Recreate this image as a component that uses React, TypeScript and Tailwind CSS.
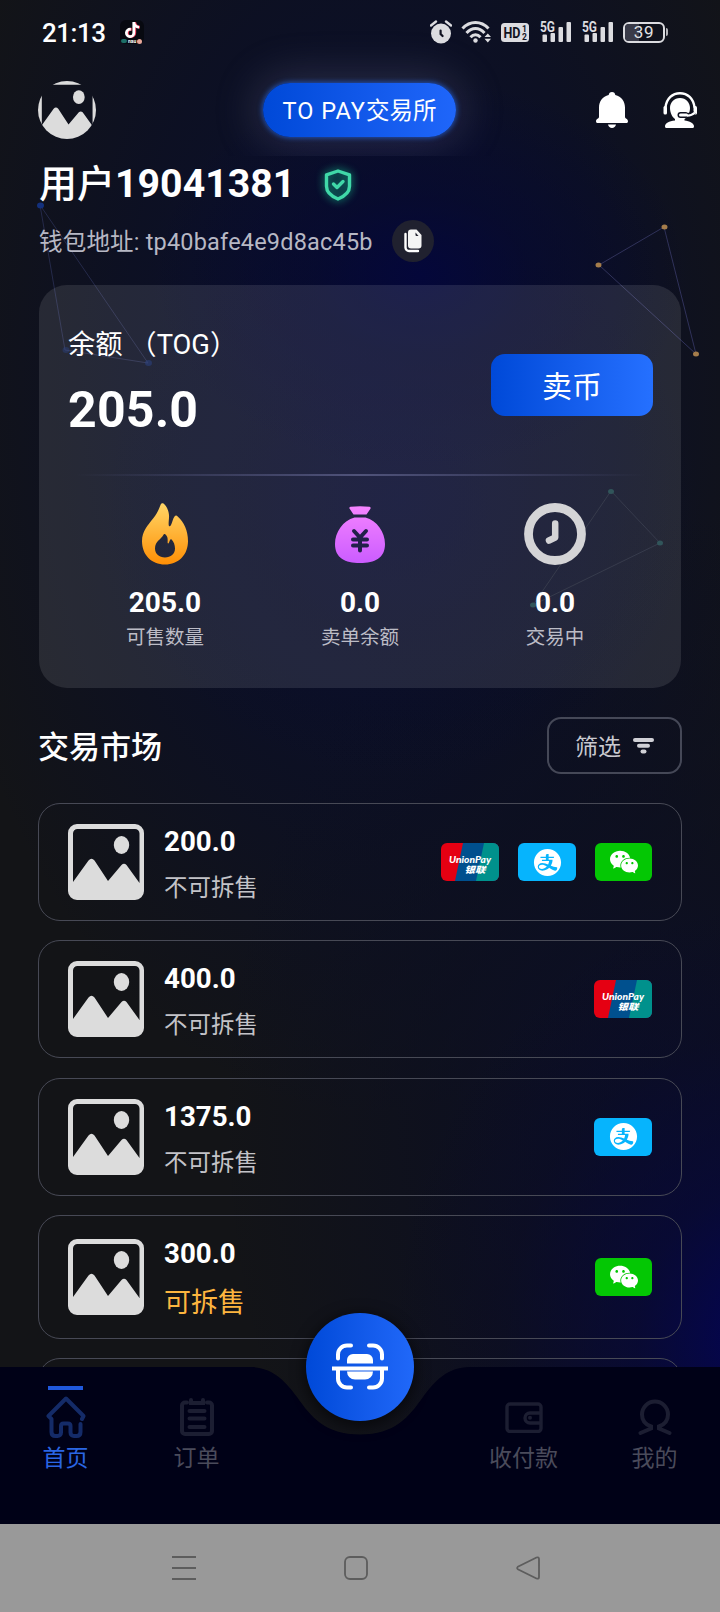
import type { ReactNode } from 'react';
import { AiFillAlipayCircle, AiFillWechat } from 'react-icons/ai';
import { FaTiktok } from 'react-icons/fa';

type PayMethod = 'union' | 'alipay' | 'wechat';

interface Order {
  amount: string;
  splittable: boolean;
  methods: PayMethod[];
}

const ORDERS: Order[] = [
  { amount: '200.0', splittable: false, methods: ['union', 'alipay', 'wechat'] },
  { amount: '400.0', splittable: false, methods: ['union'] },
  { amount: '1375.0', splittable: false, methods: ['alipay'] },
  { amount: '300.0', splittable: true, methods: ['wechat'] },
];

function SignalIcon() {
  return (
    <svg className="h-6 w-[33px]" viewBox="0 0 33 24" fill="#dcdce0">
      <text x="0" y="12" fontSize="14.500" fontWeight="700" fontFamily="Roboto" textLength="15" lengthAdjust="spacingAndGlyphs">
        5G
      </text>
      <rect x="2.500" y="14.500" width="4.500" height="7.500" rx="1" />
      <rect x="10.500" y="13" width="4.500" height="9" rx="1" />
      <rect x="18.500" y="7" width="4.500" height="15" rx="1" />
      <rect x="26.500" y="2" width="4.500" height="20" rx="1" />
    </svg>
  );
}

function StatusBar() {
  return (
    <div className="flex h-16 items-center justify-between pr-[52px] pl-[42px]">
      <div className="flex items-center">
        <span className="w-[78px] pt-px text-[26px] leading-none font-medium tracking-[-0.5px]">21:13</span>
        <span className="relative flex h-6 w-6 justify-center rounded-md bg-[#070910] pt-[2px]">
          <FaTiktok className="h-4 w-4 drop-shadow-[1px_0_0_#f0405c]" />
          <span className="absolute bottom-0 left-px flex h-[6px] w-[22px] items-center overflow-hidden text-[5px] leading-none font-bold">
            <i className="mr-px h-1 w-1.5 rounded-full bg-[#1d6f68]" />
            nau
            <i className="ml-px h-[5px] w-[5px] rounded-full bg-[#e8a79a]" />
          </span>
        </span>
      </div>
      <div className="flex items-center">
        <svg className="mr-[9px] h-6 w-[22px]" viewBox="0 0 22 24" fill="#dcdce0">
          <circle cx="11" cy="13.500" r="10" />
          <path d="M1 5.500 6 1.500M21 5.500 16 1.500" stroke="#dcdce0" strokeWidth="2.400" strokeLinecap="round" />
          <path d="M10.600 10.500v3.500l2 2" fill="none" stroke="#0f1120" strokeWidth="2.200" strokeLinecap="round" />
        </svg>
        <svg className="mr-[9px] h-6 w-[31px]" viewBox="0 0 31 24" fill="none" stroke="#dcdce0" strokeWidth="3">
          <path d="M1.500 8.500C9 .5 20 .5 27.500 8.500" />
          <path d="M5.500 13C11 7 18 7 23.500 13" />
          <path d="M9.500 17.300C12.500 14 16.500 14 19.500 17.300" />
          <circle cx="14.500" cy="20.500" r="2.200" fill="#dcdce0" stroke="none" />
          <path d="M23.500 17 26.800 13.500 30 17zM23.500 18.800 26.800 22.500 30 18.800z" fill="#dcdce0" stroke="none" />
        </svg>
        <svg className="mr-[11px] h-[19px] w-7" viewBox="0 0 28 19">
          <rect width="28" height="19" rx="3.500" fill="#dcdce0" />
          <g fill="#11131f" fontFamily="Roboto" fontWeight="700">
            <text x="2.500" y="14.800" fontSize="14.500" textLength="17" lengthAdjust="spacingAndGlyphs">
              HD
            </text>
            <text x="21" y="8.800" fontSize="8.500">1</text>
            <text x="21" y="17" fontSize="8.500">2</text>
          </g>
        </svg>
        <span className="mr-[9px]">
          <SignalIcon />
        </span>
        <span className="mr-2">
          <SignalIcon />
        </span>
        <span className="flex items-center">
          <span className="relative flex h-[21px] w-[42px] items-center justify-center overflow-hidden rounded-md border-2 border-[#dcdce0] text-[17px] leading-none text-[#e3e3e6]">
            <span className="absolute inset-y-0 left-0 w-[14px] bg-[#3a3b49]" />
            <span className="relative tracking-[0.8px]">39</span>
          </span>
          <span className="ml-px h-2 w-[2px] rounded-r bg-[#b5b5ba]" />
        </span>
      </div>
    </div>
  );
}

function PictureIcon({ className }: { className?: string }) {
  return (
    <svg className={className} viewBox="0 0 76 76" fill="#dcdcdc">
      <path
        fillRule="evenodd"
        d="M9 0h58a9 9 0 0 1 9 9v58a9 9 0 0 1-9 9H9a9 9 0 0 1-9-9V9a9 9 0 0 1 9-9zM9.500 5A4.500 4.500 0 0 0 5 9.500V58L20.500 36.500q3-3.500 6 0L40 57 53.500 41q2.500-2.300 5 0L71.500 59V9.500A4.500 4.500 0 0 0 67 5z"
      />
      <ellipse cx="53.500" cy="21" rx="7.700" ry="9" />
    </svg>
  );
}

function Header() {
  return (
    <header className="flex h-[92px] items-center justify-between pr-[23px] pl-[38px] [clip-path:inset(-100px_0_0_0)]">
      <div className="flex w-[225px] items-center">
        <div className="h-[58px] w-[58px] overflow-hidden rounded-full">
          <PictureIcon className="h-full w-full" />
        </div>
      </div>
      <div className="flex h-[54px] w-[193px] items-center justify-center rounded-full bg-linear-to-r from-[#0049d8] to-[#1f66fa] pt-[3px] text-[23.500px] leading-none whitespace-nowrap shadow-[0_0_5px_1px_#2567e8aa,0_0_44px_8px_rgba(150,150,190,0.22)]">
        <span className="tracking-[1px]">TO PAY</span>交易所
      </div>
      <div className="flex w-[241px] items-center justify-end gap-[35px]">
        <svg className="h-9 w-8" viewBox="0 0 32 36" fill="#fff">
          <path d="M16 0c2 0 3 1.300 3.300 3C25.500 4.500 29 9.500 29 15.500V25c0 1.500 3 2 3 4.200 0 1.300-.8 1.800-2 1.800H2c-1.200 0-2-.5-2-1.800C0 27 3 26.500 3 25v-9.500C3 9.500 6.500 4.500 12.700 3 13 1.300 14 0 16 0zM12 32.500h8c-.5 2.300-2 3.500-4 3.500s-3.500-1.200-4-3.500z" />
        </svg>
        <svg className="h-9 w-[34px]" viewBox="0 0 34 36" fill="#fff">
          <path d="M2.500 15.500C3.500 6.500 9.500 1.200 17 1.200s13.500 5.300 14.500 14.300" fill="none" stroke="#fff" strokeWidth="2.400" />
          <rect x="0.500" y="14" width="3.500" height="8.500" rx="1.500" />
          <rect x="30.500" y="14" width="3.500" height="8.500" rx="1.500" />
          <path d="M17 6c6 0 10 4.700 10 10 0 5-2.500 9-5.500 11v1.500c5 .8 9.500 2.500 9.500 6 0 .8-.5 1.500-1.500 1.500h-26c-1 0-1.500-.7-1.500-1.500 0-3.500 4-5.200 10-6V27C9.500 25.500 7 21 7 16 7 10.700 11 6 17 6z" />
          <path d="M31 20c-2 2.300-4.500 3.300-7 3.500" fill="none" stroke="#0f1120" strokeWidth="4.500" />
          <rect x="14.500" y="20" width="11" height="6" rx="3" fill="#0f1120" />
          <path d="M32 20.500c-2 2-4.500 3-8 3.200" fill="none" stroke="#fff" strokeWidth="2" />
          <rect x="16" y="21.500" width="9" height="3" rx="1.500" />
        </svg>
      </div>
    </header>
  );
}

function Profile() {
  return (
    <section className="pl-[39px]">
      <div className="flex h-[58px] items-center">
        <h1 className="text-[39.300px] leading-none font-bold whitespace-nowrap">
          <span className="text-[38px] font-medium">用户</span>19041381
        </h1>
        <svg className="ml-[29px] h-8 w-7 overflow-visible drop-shadow-[0_0_4px_#12b98a]" viewBox="0 0 28 32" fill="none" stroke="#40d8a8" strokeWidth="3.400" strokeLinejoin="round">
          <path d="M14 2 25.500 5.800v11.500c0 6-4.800 10-11.500 12.700C7.300 27.300 2.500 23.300 2.500 17.300V5.800z" />
          <path d="m9.500 15 3.500 3.500 6-6" strokeLinecap="round" />
        </svg>
      </div>
      <div className="mt-1.5 flex h-[42px] items-center">
        <span className="pt-[3px] text-[23.500px] leading-none tracking-[0.190px] whitespace-nowrap text-[#b7b8c4]">
          钱包地址: tp40bafe4e9d8ac45b
        </span>
        <span className="ml-[19px] flex h-[42px] w-[42px] items-center justify-center rounded-full bg-[#20212f]">
          <svg className="h-6 w-[18px]" viewBox="0 0 18 24">
            <path d="M1.500 5v13.500a3.500 3.500 0 0 0 3.500 3.500h9" fill="none" stroke="#fff" strokeWidth="2.400" strokeLinecap="round" />
            <path d="M7 .5h5.500L17.500 6v10.500a3 3 0 0 1-3 3H7a3 3 0 0 1-3-3v-13a3 3 0 0 1 3-3z" fill="#f4f4f4" />
            <path d="M11.500 3.500 14.500 7h-2a1 1 0 0 1-1-1z" fill="#20212f" />
          </svg>
        </span>
      </div>
    </section>
  );
}

function Stat({ icon, value, label }: { icon: ReactNode; value: string; label: string }) {
  return (
    <div className="flex w-[195px] flex-col items-center">
      <div className="flex h-[62px] items-center">{icon}</div>
      <div className="mt-[22px] text-[28px] leading-8 font-bold">{value}</div>
      <div className="mt-[5px] text-[19.500px] leading-7 text-[#bcbcc6]">{label}</div>
    </div>
  );
}

function FlameIcon() {
  return (
    <svg className="h-[62px] w-[46px]" viewBox="0 0 46 62">
      <defs>
        <linearGradient id="flame" x1="0" y1="0" x2="0" y2="1">
          <stop offset="0" stopColor="#ffd667" />
          <stop offset="1" stopColor="#ff8f05" />
        </linearGradient>
      </defs>
      <path
        fill="url(#flame)"
        fillRule="evenodd"
        d="M21.500.5C25 3.500 27.500 9 27 15c-.2 3-.5 5-.3 7 .2 1.800 1.500 1.500 2.300 0 1.500-3 1.700-6 3.700-8.700 1-1.200 2-.8 3 .2C42 19 46 28 46 38c0 14-9.500 23.500-23 23.500S0 52 0 38C0 28 6 22 11.500 15 15 10.500 16.800 6.500 18.500 2c.5-1.800 1.800-2.300 3-1.500zM23.500 31.500c-1-.8-1.700-.5-2.300.8-1.700 3.700-8.200 6-8.200 13.200 0 5.500 4.300 9 10 9s10-3.500 10-9c0-3.500-1.300-6.500-3.200-8.700-.8-.8-1.400-.6-1.800.2l-1.200 3c-.5.8-1.200.5-1.200-.5.2-3.500.2-6-2.100-8z"
      />
    </svg>
  );
}

function MoneyBagIcon() {
  return (
    <svg className="h-[57px] w-[50px]" viewBox="0 0 50 57">
      <defs>
        <linearGradient id="bag" x1="0" y1="0" x2="0" y2="1">
          <stop offset="0" stopColor="#f584ff" />
          <stop offset="1" stopColor="#cb5cff" />
        </linearGradient>
      </defs>
      <path
        fill="url(#bag)"
        d="M15.500.8Q25-.5 34.500.8c1.500.3 1.300 1.500.6 2.500L31.500 8.500H18.500L15 3.300C14.200 2.300 14 1.100 15.500.8zM19.500 11.500h11C42 14.500 50 26 50 38c0 14-10 19-25 19S0 52 0 38C0 26 8 14.500 19.500 11.500z"
      />
      <path d="m19 25 6 6.500 6-6.500M18 33.500h14M18 39.500h14M25 31.500v13" fill="none" stroke="#22204a" strokeWidth="4" strokeLinecap="round" />
    </svg>
  );
}

function ClockIcon() {
  return (
    <svg className="h-[62px] w-[62px]" viewBox="0 0 62 62" fill="none" stroke="#d4d4d6">
      <circle cx="31" cy="31" r="26.500" strokeWidth="8.800" />
      <path d="M31.200 20.500v14L25 37.500" strokeWidth="6.500" strokeLinecap="round" strokeLinejoin="round" />
    </svg>
  );
}

function BalanceCard() {
  return (
    <section className="mx-[39px] mt-[23px] h-[403px] rounded-[28px] bg-white/10 pt-10">
      <div className="flex h-[149px] justify-between pr-7 pl-[29px]">
        <div>
          <div className="text-[27.300px] leading-10 whitespace-pre">余额 （TOG）</div>
          <div className="mt-[14px] text-[50px] leading-[62px] font-bold tracking-[0.2px]">205.0</div>
        </div>
        <button className="mt-[29px] h-[62px] w-[162px] rounded-[14px] bg-linear-to-r from-[#0049d8] to-[#2570ff] pt-[3px] text-[30px] leading-none">
          卖币
        </button>
      </div>
      <div className="mx-9 h-[2px] bg-linear-to-r from-transparent via-[#50537a] to-transparent" />
      <div className="mt-[27px] flex justify-center">
        <Stat icon={<FlameIcon />} value="205.0" label="可售数量" />
        <Stat icon={<MoneyBagIcon />} value="0.0" label="卖单余额" />
        <Stat icon={<ClockIcon />} value="0.0" label="交易中" />
      </div>
    </section>
  );
}

function UnionPayLogo() {
  return (
    <svg className="h-[38px] w-[58px] rounded-md" viewBox="0 0 58 38">
      <rect width="58" height="38" fill="#e50012" />
      <path d="M22 0h36v38H14z" fill="#00508e" />
      <path d="M43 0h15v38H35z" fill="#00918c" />
      <g fill="#fff" fontStyle="italic">
        <text x="8" y="19.500" fontSize="10" fontWeight="900" fontFamily="Lato" textLength="42" lengthAdjust="spacingAndGlyphs">
          UnionPay
        </text>
        <text x="23.500" y="30" fontSize="8.800" fontFamily="Noto Sans CJK SC" fontWeight="900" textLength="21" lengthAdjust="spacingAndGlyphs">
          银联
        </text>
      </g>
    </svg>
  );
}

function PayBadge({ method }: { method: PayMethod }) {
  if (method === 'union') return <UnionPayLogo />;
  if (method === 'alipay') {
    return (
      <span className="flex h-[38px] w-[58px] items-center justify-center rounded-md bg-[#06b4fd]">
        <AiFillAlipayCircle className="h-[31px] w-[31px]" />
      </span>
    );
  }
  return (
    <span className="flex h-[38px] w-[57px] items-center justify-center rounded-md bg-[#04c704]">
      <AiFillWechat className="h-8 w-8" />
    </span>
  );
}

function OrderRow({ order }: { order: Order }) {
  return (
    <li
      className={`flex shrink-0 items-center rounded-[22px] border border-[#474955] pr-[29px] pl-[29px] ${
        order.splittable ? 'h-[124px]' : 'h-[118px]'
      }`}
    >
      <PictureIcon className="h-[76px] w-[76px]" />
      <div className="ml-5 pt-[6px]">
        <div className="text-[27.700px] leading-8 font-bold">{order.amount}</div>
        {order.splittable ? (
          <div className="mt-[15px] text-[27px] leading-9 text-[#fdb53f]">可拆售</div>
        ) : (
          <div className="mt-[14px] text-[23.500px] leading-8 text-[#c3c3c8]">不可拆售</div>
        )}
      </div>
      <div className="ml-auto flex gap-[19px]">
        {order.methods.map((method) => (
          <PayBadge key={method} method={method} />
        ))}
      </div>
    </li>
  );
}

function Market() {
  return (
    <section className="mt-[29px] min-h-0 flex-1 overflow-hidden px-[38px]">
      <div className="flex h-[57px] items-center justify-between">
        <h2 className="pt-1 text-[31px] leading-none font-medium">交易市场</h2>
        <button className="flex h-[57px] w-[135px] items-center justify-center gap-3 rounded-[14px] border-2 border-[#454857] text-[23px] leading-none text-[#c9c9d0]">
          <span className="pt-1">筛选</span>
          <svg className="mt-px h-4 w-[21px]" viewBox="0 0 21 16" fill="#d0d0d6">
            <rect width="21" height="4" rx="2" />
            <rect x="4" y="5.800" width="13" height="4" rx="2" />
            <rect x="7.500" y="11.500" width="6" height="4" rx="2" />
          </svg>
        </button>
      </div>
      <ul className="mt-[29px] flex flex-col gap-[19.300px]">
        {ORDERS.map((order) => (
          <OrderRow key={order.amount} order={order} />
        ))}
        <li className="h-[118px] shrink-0 rounded-[22px] border border-[#474955]" />
      </ul>
    </section>
  );
}

function Tab({ icon, label, active }: { icon: ReactNode; label: string; active?: boolean }) {
  return (
    <div className="flex w-[131px] flex-col items-center pt-[19px]">
      <span className={`h-1 w-[35px] ${active ? 'bg-[#2059dc]' : ''}`} />
      <span className="mt-1 flex h-[46px] items-center">{icon}</span>
      <span className={`mt-[3px] text-[23px] leading-8 ${active ? 'text-[#2a66e4]' : 'text-[#4a4b5b]'}`}>{label}</span>
    </div>
  );
}

function TabBar() {
  return (
    <nav className="relative h-[157px]">
      <svg className="absolute inset-0 h-full w-full" viewBox="0 0 720 157">
        <path
          fill="#000117"
          d="M0 0h250C273 0 286 15 297 30C311 50 325 67.500 360 67.500S409 50 423 30C434 15 447 0 470 0H720V157H0z"
        />
      </svg>
      <div className="relative flex justify-between">
        <Tab
          active
          label="首页"
          icon={
            <svg className="h-[42px] w-10" viewBox="0 0 40 42" fill="none" stroke="#142b68" strokeWidth="4" strokeLinecap="round" strokeLinejoin="round">
              <path d="M36 23 37.500 20 20 2.500 2.500 20 5.500 23v13c0 2.500 1.500 4 4 4h2c2 0 3.500-1.300 3.500-3.500V30c0-1.500 1-2.500 2.500-2.500H22c1.500 0 2.500 1 2.500 2.500v6.500c0 2.200 1.500 3.500 3.500 3.500h2.500c2.500 0 4-1.500 4-4v-8" />
            </svg>
          }
        />
        <Tab
          label="订单"
          icon={
            <svg className="h-[38px] w-[34px]" viewBox="0 0 34 38" fill="none" stroke="#1c1e32" strokeWidth="4" strokeLinecap="round">
              <path d="M7 4.500H5A3 3 0 0 0 2 7.500V33a3 3 0 0 0 3 3h24a3 3 0 0 0 3-3V7.500a3 3 0 0 0-3-3h-2M11 2v3h12V2M9.500 13h15M9.500 20.500h15M9.500 29h15" />
            </svg>
          }
        />
        <div className="w-[196px]" />
        <Tab
          label="收付款"
          icon={
            <svg className="h-[31px] w-[38px]" viewBox="0 0 38 31" fill="none" stroke="#1c1e32" strokeWidth="3.400">
              <rect x="2" y="2" width="34" height="27.500" rx="3" />
              <path d="M36 11H25a5 5 0 0 0 0 10h11" />
              <circle cx="25" cy="15.800" r="2" fill="#1c1e32" stroke="none" />
            </svg>
          }
        />
        <Tab
          label="我的"
          icon={
            <svg className="h-9 w-[34px]" viewBox="0 0 34 36" fill="none" stroke="#1c1e32" strokeWidth="4" strokeLinecap="round">
              <path d="M2.500 34 13 29.500v-2C7.500 25.500 4 21 4 15.500a13 13 0 0 1 26 0c0 5.500-3.500 10-9 12v2L31.500 34" />
            </svg>
          }
        />
      </div>
      <button className="absolute -top-[54px] left-[306px] flex h-[108px] w-[108px] items-center justify-center rounded-full bg-linear-to-r from-[#0049d8] to-[#2068f9] shadow-[0_3px_14px_2px_rgba(0,0,0,0.55)]">
        <svg className="h-12 w-14" viewBox="0 0 56 48" fill="none" stroke="#fff" strokeWidth="4" strokeLinecap="round">
          <path d="M6 15.500v-4A9 9 0 0 1 15 2.500h4M37 2.500h4a9 9 0 0 1 9 9v4M6 27v8.500a9 9 0 0 0 9 9h4M37 44.500h4a9 9 0 0 0 9-9V27" />
          <path d="M0 23.500h56v4H0z" fill="#fff" stroke="none" />
          <path d="M15 20.500v-3.500a6 6 0 0 1 6-6h14a6 6 0 0 1 6 6v3.500zM15 28.500h26a8 8 0 0 1-8 8H23a8 8 0 0 1-8-8z" fill="#fff" stroke="none" />
        </svg>
      </button>
    </nav>
  );
}

function SystemNav() {
  return (
    <div className="flex h-[88px] items-center justify-center gap-[148px] bg-[#999] pr-2">
      <svg className="h-[26px] w-6" viewBox="0 0 24 26" stroke="#5d5d5d" strokeWidth="2">
        <path d="M0 2h24M0 13h24M0 24h24" />
      </svg>
      <svg className="h-[26px] w-6" viewBox="0 0 24 26" fill="none" stroke="#5d5d5d" strokeWidth="1.800">
        <rect x="1" y="2" width="22" height="22" rx="5" />
      </svg>
      <svg className="h-[26px] w-6" viewBox="0 0 24 26" fill="none" stroke="#5d5d5d" strokeWidth="1.800" strokeLinejoin="round">
        <path d="M20.500 2.500 1.800 11.800q-1.300 1.200 0 2.400L20.500 23.500q2.500.8 2.500-1.500V4q0-2.300-2.500-1.500z" />
      </svg>
    </div>
  );
}

function Constellations() {
  return (
    <svg className="absolute inset-0 h-full w-full" viewBox="0 0 720 1612" fill="none">
      <path d="M40 205 65 350 148 363z" stroke="#252a4a" />
      <path d="M664 227 599 265 696 354z" stroke="#30325a" />
      <path d="M611 491 660 543 533 605z" stroke="#202538" />
      <g fill="#13307c">
        <ellipse cx="40.500" cy="205.500" rx="3.500" ry="3" />
        <ellipse cx="66" cy="350" rx="3.500" ry="3" opacity="0.4" />
        <ellipse cx="148.500" cy="363" rx="3.500" ry="3" opacity="0.5" />
      </g>
      <g fill="#a57d4b">
        <ellipse cx="664.500" cy="227" rx="3" ry="2.500" />
        <ellipse cx="598.500" cy="265" rx="3" ry="2.500" />
        <ellipse cx="696" cy="354" rx="3" ry="2.500" />
      </g>
      <g fill="#1a4248">
        <ellipse cx="611" cy="491.500" rx="3" ry="2.500" />
        <ellipse cx="660" cy="543" rx="3" ry="2.500" />
        <ellipse cx="533" cy="605" rx="3" ry="2.500" />
      </g>
    </svg>
  );
}

export default function App() {
  return (
    <div className="relative h-[1612px] w-[720px] overflow-hidden bg-[#131417] bg-[radial-gradient(ellipse_270px_200px_at_420px_275px,#04073a_0%,rgba(5,8,50,0.6)_40%,transparent_100%),radial-gradient(ellipse_300px_280px_at_400px_500px,rgba(7,11,50,0.75)_0%,rgba(8,12,44,0.45)_50%,transparent_100%),radial-gradient(ellipse_380px_440px_at_770px_1340px,#030456_0%,rgba(6,7,60,0.65)_35%,rgba(10,11,40,0.4)_70%,transparent_100%),radial-gradient(ellipse_420px_620px_at_640px_1120px,rgba(10,13,40,0.9)_0%,rgba(11,14,34,0.6)_50%,transparent_100%),radial-gradient(ellipse_450px_740px_at_370px_380px,#0a0f2e_0%,rgba(11,15,38,0.8)_55%,transparent_100%)] font-[Roboto,'Noto_Sans_CJK_SC',sans-serif] text-white">
      <Constellations />
      <div className="relative flex h-full flex-col">
        <StatusBar />
        <Header />
        <Profile />
        <BalanceCard />
        <Market />
        <TabBar />
        <SystemNav />
      </div>
    </div>
  );
}
